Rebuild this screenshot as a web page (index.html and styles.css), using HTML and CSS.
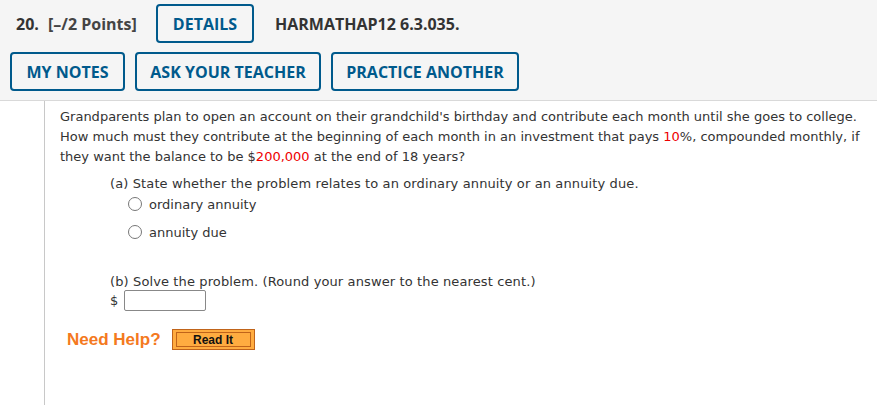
FILE: index.html
```html
<!DOCTYPE html>
<html>
<head>
<meta charset="utf-8">
<link rel="stylesheet" href="styles.css">
</head>
<body>
<div class="head">
  <div class="row1">
    <span class="qnum">20.</span>
    <span class="pts">[&ndash;/2 Points]</span>
    <button class="btn btn-details">DETAILS</button>
    <span class="code">HARMATHAP12 6.3.035.</span>
  </div>
  <div class="row2">
    <button class="btn">MY NOTES</button>
    <button class="btn">ASK YOUR TEACHER</button>
    <button class="btn">PRACTICE ANOTHER</button>
  </div>
</div>
<div class="body">
  <div class="content">
    <p class="problem">Grandparents plan to open an account on their grandchild's birthday and contribute each month until she goes to college. How much must they contribute at the beginning of each month in an investment that pays <span class="red">10</span>%, compounded monthly, if they want the balance to be $<span class="red">200,000</span> at the end of 18 years?</p>
    <div class="part">
      <div class="q">(a) State whether the problem relates to an ordinary annuity or an annuity due.</div>
      <label class="opt"><span class="radio"></span>ordinary annuity</label>
      <label class="opt"><span class="radio"></span>annuity due</label>
    </div>
    <div class="part partb">
      <div class="q">(b) Solve the problem. (Round your answer to the nearest cent.)</div>
      <div class="ans"><span>$</span><span class="input"></span></div>
    </div>
    <div class="help">
      <span class="need">Need Help?</span>
      <span class="readit"><span class="readit-in">Read It</span></span>
    </div>
  </div>
</div>
</body>
</html>
```
FILE: styles.css
```css
html, body { margin: 0; padding: 0; background: #fff; }
body { width: 877px; height: 405px; overflow: hidden; }
.head {
  background: #f5f5f5;
  border-bottom: 1px solid #d9d9d9;
  height: 101px;
  box-sizing: border-box;
  padding: 4px 0 0 10px;
  font-family: "Open Sans", sans-serif;
  font-weight: 700;
}
.row1 { display: flex; align-items: center; height: 39px; }
.qnum { font-size: 16px; color: #333; margin-left: 6px; width: 32px; }
.pts { font-size: 16px; color: #444; width: 108px; }
.code { font-size: 16px; color: #333; margin-left: 21px; }
.row2 { display: flex; gap: 10px; margin-top: 9px; }
.btn {
  font-family: "Open Sans", sans-serif;
  font-weight: 700;
  font-size: 16px;
  color: #005a8c;
  background: transparent;
  border: 2px solid #005a8c;
  border-radius: 4px;
  height: 39px;
  padding: 0;
  box-sizing: border-box;
}
.btn-details { width: 98px; }
.row2 .btn:nth-child(1) { width: 115px; }
.row2 .btn:nth-child(2) { width: 186px; }
.row2 .btn:nth-child(3) { width: 188px; }
.body {
  margin-left: 44px;
  border-left: 1px solid #c8c8c8;
  height: 304px;
  padding: 6px 0 0 15px;
  box-sizing: border-box;
  font-family: "DejaVu Sans", Verdana, sans-serif;
  font-size: 13px;
  color: #333;
}
.problem { margin: 0; line-height: 20px; }
.red { color: #e00; }
.part { margin-left: 50px; margin-top: 7px; }
.q { line-height: 20px; letter-spacing: 0.12px; }
.opt { display: flex; align-items: center; height: 28px; margin-left: 18px; margin-top: -4px; }
.opt + .opt { margin-top: 0; }
.radio {
  width: 12px; height: 12px;
  border: 1px solid #777;
  border-radius: 50%;
  margin-right: 7px;
  background: #fff;
}
.partb { margin-top: 26px; }
.ans { display: flex; align-items: center; gap: 6px; margin-top: -2px; }
.input {
  width: 80px; height: 19px;
  border: 1px solid #888;
  border-radius: 2px;
  display: inline-block;
}
.help { display: flex; align-items: center; margin-top: 18px; margin-left: 7px; }
.need {
  font-family: "Liberation Sans", Arial, sans-serif;
  font-weight: 700;
  font-size: 17px;
  color: #f47920;
  margin-right: 11px;
}
.readit {
  display: inline-flex;
  width: 83px; height: 21px;
  box-sizing: border-box;
  border: 1px solid #c0641a;
  background: #ffac40;
  padding: 2px 3px;
}
.readit-in {
  flex: 1;
  border: 1px solid #c0641a;
  display: flex; align-items: center; justify-content: center;
  font-family: "Liberation Sans", Arial, sans-serif;
  font-weight: 700;
  font-size: 12px;
  color: #111;
  line-height: 1;
}
```
